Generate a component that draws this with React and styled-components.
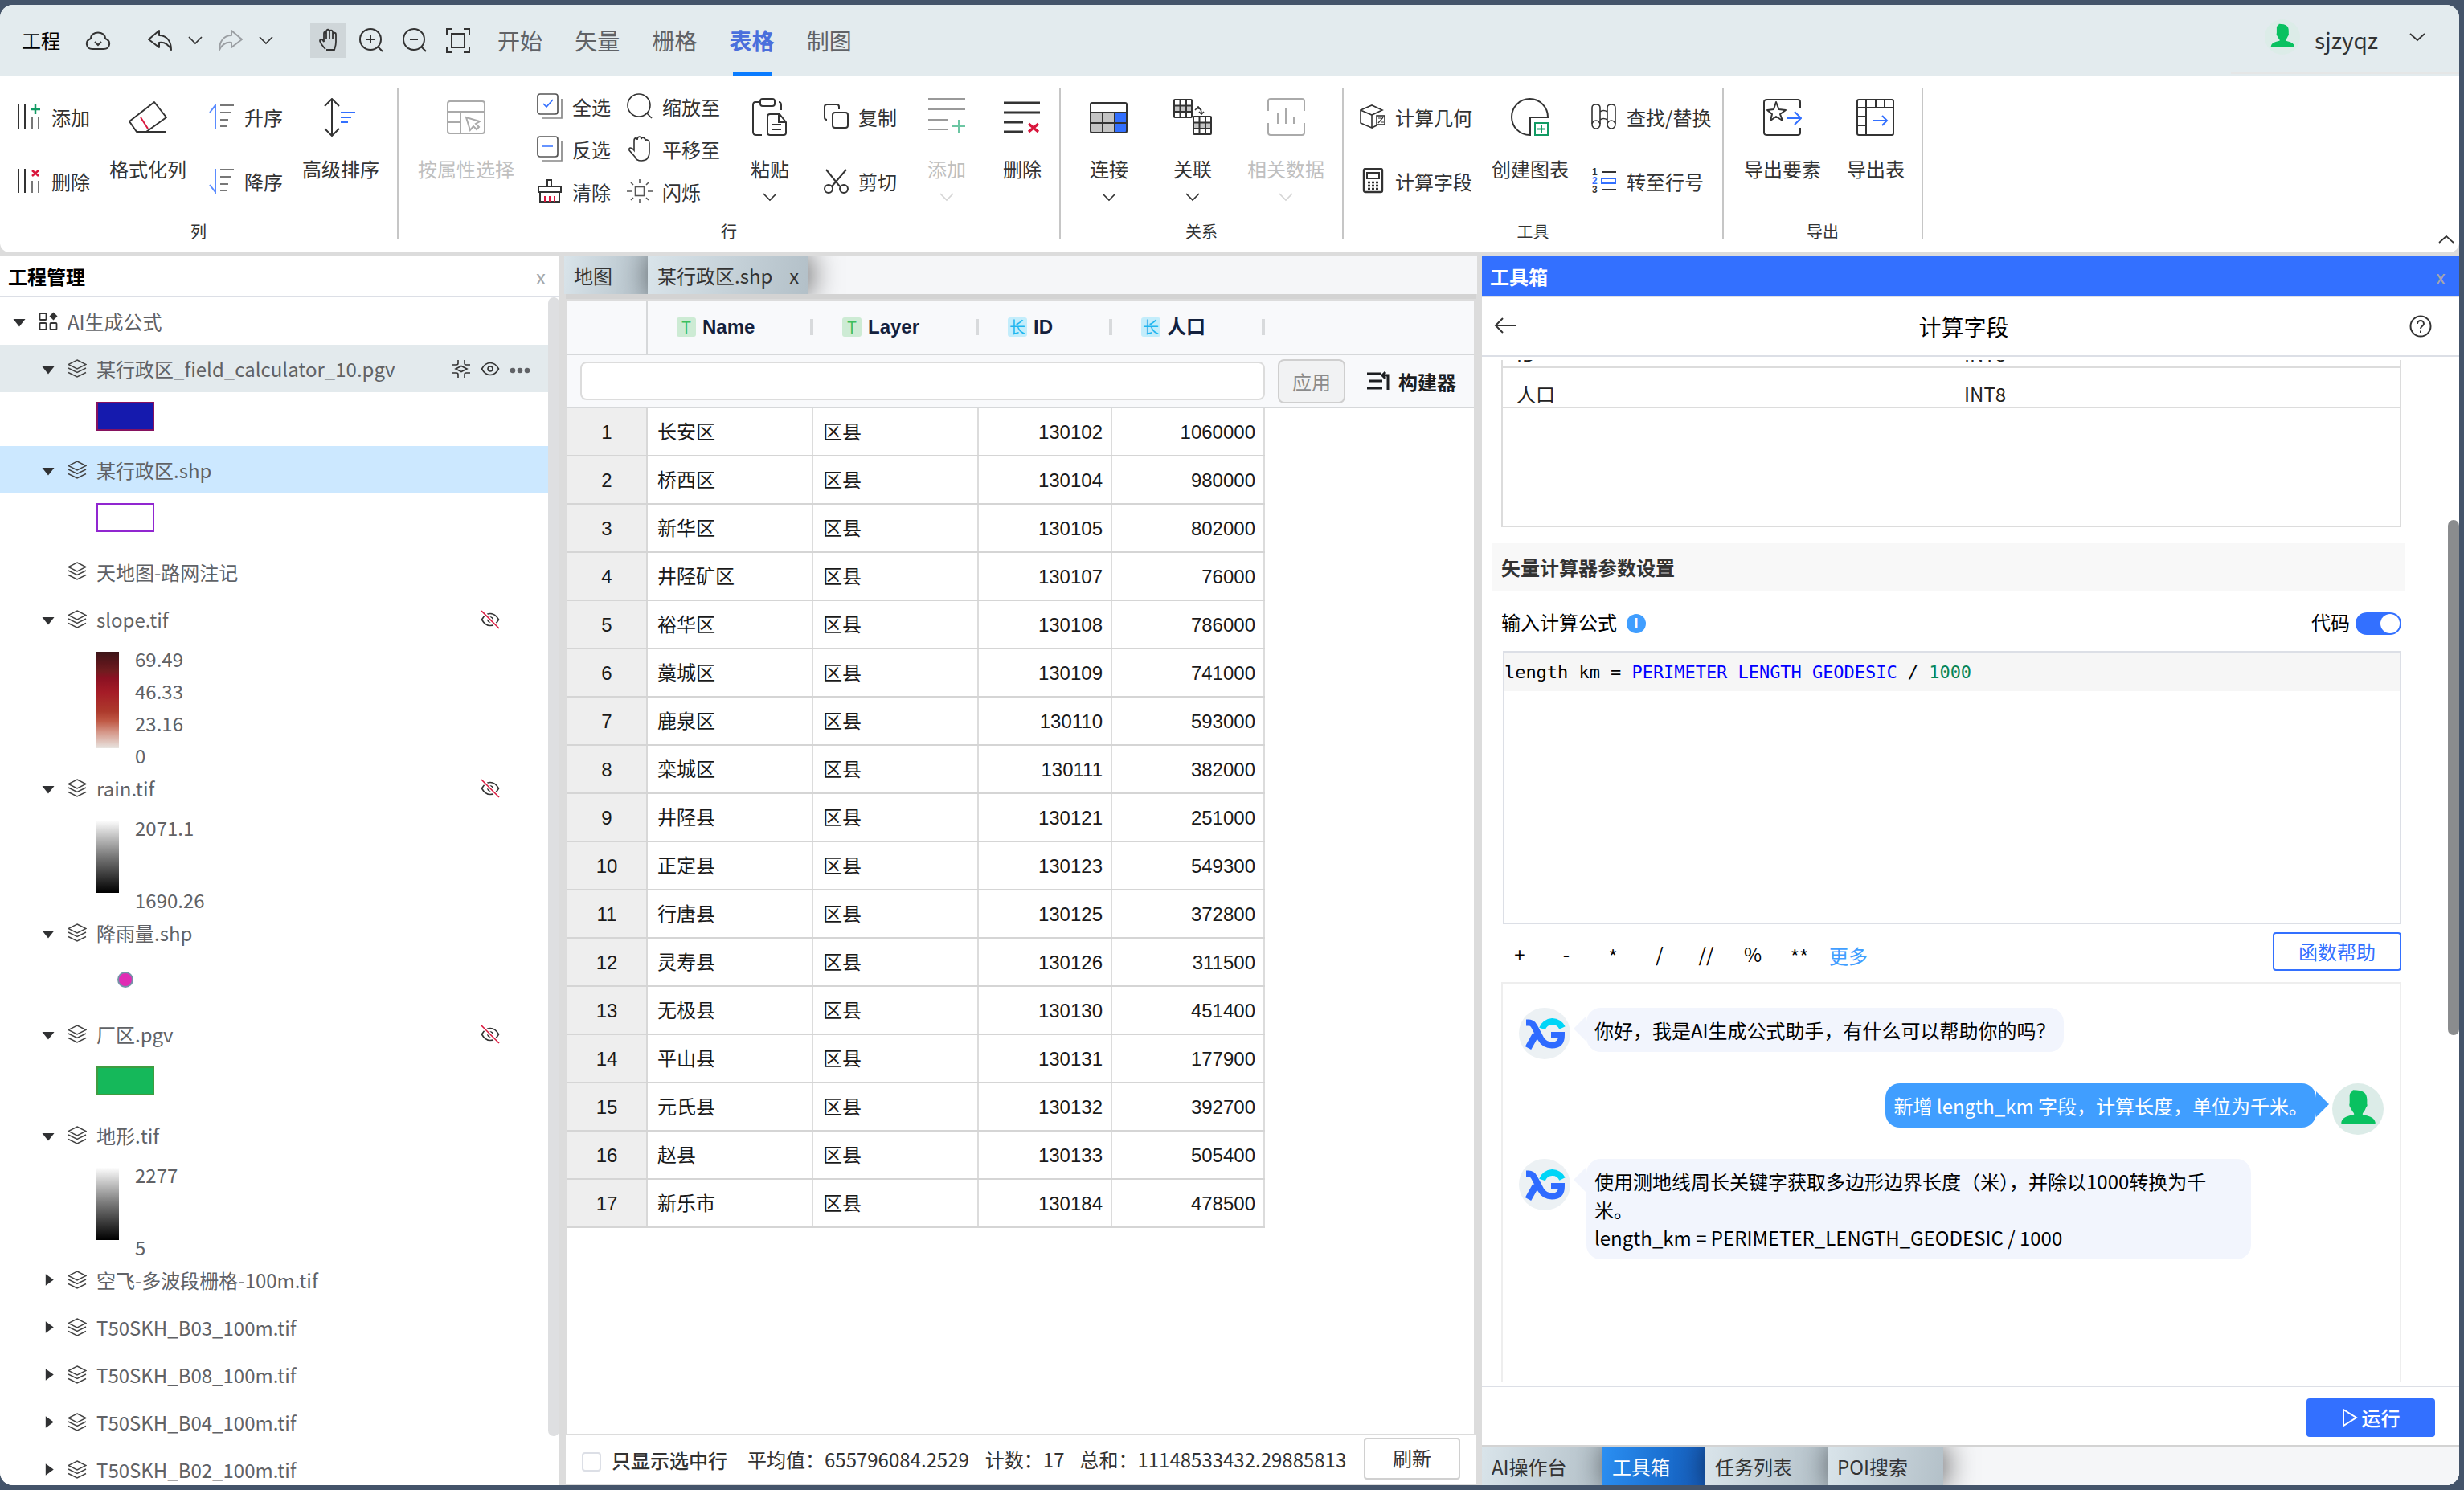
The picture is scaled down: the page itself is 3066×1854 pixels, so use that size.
import React from "react";
import styled, { createGlobalStyle, css } from "styled-components";

const sans = `"Noto Sans CJK SC", "Noto Sans", sans-serif`;
const arial = `"Liberation Sans", "Noto Sans CJK SC", sans-serif`;
const mono = `"DejaVu Sans Mono", "Noto Sans CJK SC", monospace`;

const Global = createGlobalStyle`
  * { box-sizing: border-box; }
  html, body { margin: 0; padding: 0; background: #44546a; }
  body { font-family: ${sans}; font-size: 24px; color: #333; overflow: hidden; }
`;

const Window = styled.div`
  display: flex;
  flex-direction: column;
  width: 3060px;
  height: 1842px;
  margin-top: 6px;
  border-radius: 16px;
  overflow: hidden;
  background: #dcdcdc;
`;

const Svg = styled.svg.attrs((p) => ({
  viewBox: `0 0 ${p.$w || 32} ${p.$h || p.$w || 32}`,
  width: p.$w || 32,
  height: p.$h || p.$w || 32,
}))`
  display: block;
  flex: none;
  fill: none;
  stroke: ${(p) => p.$c || "#333"};
  stroke-width: ${(p) => p.$s || 2};
`;

/* ---------- icons ---------- */
const BLUE = "#3370ff";
const GREEN = "#119a63";
const RED = "#d9163c";

const Chevron = ({ c, w = 18, up }) => (
  <Svg $w={w} $h={12} $c={c} $s={1.700}>
    {up ? <path d={`M1 10 L${w / 2} 2 L${w - 1} 10`} /> : <path d={`M1 2 L${w / 2} 10 L${w - 1} 2`} />}
  </Svg>
);
const Cloud = () => (
  <Svg>
    <path d="M9 27 H23 C31 27 33 17 25 14 C25 4 7 4 7 14 C-1 17 1 27 9 27 Z M12 18 L16 22 L20 18" />
  </Svg>
);
const Undo = () => (
  <Svg>
    <path d="M15 4 L2 15 L15 25 V19 C22 18 27 22 30 28 C30 18 25 10 15 10 Z" strokeLinejoin="round" />
  </Svg>
);
const Redo = () => (
  <Svg $c="#9b9fa3">
    <path d="M17 4 L30 15 L17 25 V19 C10 18 5 22 2 28 C2 18 7 10 17 10 Z" strokeLinejoin="round" />
  </Svg>
);
const handPath =
  "M11 27 C8 24 5 20 4 17 C4 14 7 14 9 18 V8 C9 5 12 5 12 8 V14 V5 C12 2 16 2 16 5 V14 V5.500 C16 3 20 3 20 6 V14 V9 C20 6 24 6 24 9 V18 C24 23 23 25 22 28 H12";
const Hand = () => (
  <Svg $w={28} $h={32} $s={1.800}>
    <path d={handPath} />
  </Svg>
);
const Zoom = ({ plus }) => (
  <Svg>
    <circle cx="15" cy="15" r="13" />
    <path d={`M24 24 L30 30 M10 15 H20 ${plus ? "M15 10 V20" : ""}`} />
  </Svg>
);
const Fit = () => (
  <Svg>
    <rect x="8" y="8" width="16" height="17" />
    <path d="M2 9 V2 H9 M23 2 H30 V9 M30 24 V31 H23 M9 31 H2 V24" />
  </Svg>
);
const Person = ({ size = 62 }) => (
  <svg width={size} height={size} viewBox="0 0 62 62">
    <circle cx="31" cy="31" r="31" fill="#dcece8" />
    <path
      fill="#09c160"
      d="M25 8 C38 8 42 12 42 20 V25 C43 28 41 28 40 31 C39 34 37 35 36.500 37 C36.500 39 50 38 52 47 V49 H11 V47 C13 38 26 39 26.500 37 C26 35 24 34 23 31 C21 28 20 27 21 24 V14 C22 10 24 11 25 8 Z"
    />
  </svg>
);
const XGLogo = () => (
  <Svg $w={64} $s={8}>
    <circle cx="32" cy="32" r="32" fill="#ecf1f4" stroke="none" />
    <path d="M29 26 A13.500 13.500 0 0 1 54 25" stroke="#00d5f7" />
    <path d="M9 18.500 H12 C15 18.500 17 19 19 23 L27 38 C31 45 36 46.500 41 46.500 C50 46.500 53 42 53 34 H40" stroke="#2f6bff" />
    <path d="M21 33 L11.500 50" stroke="#2f6bff" strokeWidth="8.500" />
  </Svg>
);

const ColBars = ({ mark }) => (
  <Svg>
    <path d="M3 1 V31 M11 1 V31" />
    <path d="M20 16 V31 M28 16 V31" stroke="#777" />
    {mark === "add" ? <path d="M24 1 V13 M18 7 H30" stroke={GREEN} strokeWidth="2.500" /> : <path d="M20 3 L28 10 M28 3 L20 10" stroke={RED} strokeWidth="2.500" />}
  </Svg>
);
const Eraser = () => (
  <Svg $w={48}>
    <path d="M10 42 L1 29 L32 5 L47 24 L22 42 Z M10 42 H47" strokeLinejoin="round" />
    <path d="M15 24 L24 38" stroke={RED} />
  </Svg>
);
const SortSmall = ({ down }) => (
  <Svg>
    <path d={down ? "M8 1 V30 L1 21" : "M8 31 V2 L1 11"} stroke="#5b8cff" />
    <path d="M14 2 H31 M14 11 H27 M14 20 H24 M14 28 H23" stroke="#777" />
  </Svg>
);
const SortAdv = () => (
  <Svg $w={48}>
    <path d="M13 1 V47 M4 10 L13 1 L22 10 M4 38 L13 47 L22 38" />
    <path d="M24 18 H42 M24 24 H37 M24 30 H33" stroke={BLUE} />
  </Svg>
);
const AttrSelect = () => (
  <Svg $w={48} $c="#aaa">
    <rect x="1" y="4" width="46" height="40" rx="3" />
    <path d="M1 17 H47 M17 17 V44 M1 30 H17 M24 24 L29 40 L33 35 L37 39 L40 36 L36 32 L41 29 Z" />
  </Svg>
);
const CheckBoxIco = ({ minus }) => (
  <Svg $s={1.700}>
    <rect x="1" y="1" width="25" height="25" rx="3" stroke="#555" />
    <path d="M31 7 V31 H7" stroke="#888" />
    <path d={minus ? "M7 13 H20" : "M8 13 L12 17 L20 8"} stroke={BLUE} />
  </Svg>
);
const Brush = () => (
  <Svg>
    <path d="M13 9 V2 H18 V9 M2 10 H30 V17 H2 Z M4 17 V29 H28 V17" />
    <path d="M10 22 V29 M16 22 V29 M22 22 V29" stroke={RED} />
  </Svg>
);
const Lens = () => (
  <Svg $s={1.600}>
    <circle cx="15" cy="15" r="14" />
    <path d="M25 25 L31 31" />
  </Svg>
);
const HandThin = () => (
  <Svg $s={1.600}>
    <path d="M10 26 L3 18 C2 14 6 14 9 18 V6 C9 2 13 2 13 5 C13 0 18 0 18 4 C19 1 23 2 23 6 C24 4 28 5 28 9 V20 C28 28 24 31 18 31 C14 31 11 29 10 26 Z" />
  </Svg>
);
const Flash = () => (
  <Svg $s={1.600} $c="#555">
    <rect x="10.500" y="10.500" width="11" height="11" />
    <path d="M16 1 V6 M16 26 V31 M0 16 H6 M26 16 H32 M5 5 L8 8 M24 24 L27 27 M27 5 L24 8 M5 27 L8 24" />
  </Svg>
);
const Paste = () => (
  <Svg $w={48}>
    <path d="M13 5 H6 Q3 5 3 9 V42 Q3 46 7 46 H14 M35 5 Q38 5 38 9 V15" />
    <rect x="12" y="1" width="18" height="9" rx="3" />
    <path d="M24 20 H36 L44 30 V43 Q44 46 41 46 H24 Q21 46 21 43 V23 Q21 20 24 20 Z M35 20 V30 H44 M27 33 H38 M27 39 H38" />
  </Svg>
);
const Copy = () => (
  <Svg>
    <path d="M5 20 Q2 20 2 17 V4 Q2 1 5 1 H17 Q20 1 20 4 V7" />
    <rect x="12" y="11" width="19" height="19" rx="3" />
  </Svg>
);
const Cut = () => (
  <Svg>
    <path d="M4 2 L21 23 M29 2 L11 23" />
    <circle cx="7" cy="26" r="5" />
    <circle cx="26" cy="26" r="5" />
  </Svg>
);
const RowAdd = () => (
  <Svg $w={48} $c="#999">
    <path d="M1 1 H47 M1 14 H47 M1 27 H25 M1 39 H25" />
    <path d="M39 27 V43 M31 35 H47" stroke="#6cc6a3" />
  </Svg>
);
const RowDel = () => (
  <Svg $w={48} $s={3}>
    <path d="M1 6 H46 M1 18 H46 M1 30 H25 M1 42 H25" />
    <path d="M32 32 L44 42 M44 32 L32 42" stroke={RED} strokeWidth="3.500" />
  </Svg>
);
const Join = () => (
  <Svg $w={48}>
    <rect x="2" y="18" width="29" height="25" fill="#c4c4c4" stroke="none" />
    <rect x="31" y="18" width="15" height="25" fill={BLUE} stroke="none" />
    <rect x="1" y="6" width="45" height="37" rx="2" />
    <path d="M1 18 H46 M1 31 H46 M16 18 V43 M31 18 V43" />
  </Svg>
);
const MiniGrid = ({ x, y }) => (
  <g transform={`translate(${x} ${y})`}>
    <rect width="22" height="22" fill="#fff" rx="1" />
    <rect x="1" y="8" width="20" height="7" fill="#c4c4c4" stroke="none" />
    <path d="M0 7.500 H22 M0 15 H22 M7.500 0 V22 M15 0 V22" />
  </g>
);
const Relate = () => (
  <Svg $w={48}>
    <MiniGrid x={1} y={2} />
    <MiniGrid x={25} y={23} />
    <path d="M27 15 L31 11 L35 15 M31 11 V13 Q35 13 35 19 M32 17 L35 20 L38 17" strokeWidth="1.600" />
  </Svg>
);
const RelData = () => (
  <Svg $w={48} $c="#aaa">
    <path d="M2 16 V4 Q2 1 5 1 H44 Q47 1 47 4 V16 M2 31 V43 Q2 46 5 46 H44 Q47 46 47 43 V31 M14 18 V32 M24 12 V32 M34 23 V32" />
  </Svg>
);
const Cube = () => (
  <Svg $s={1.600}>
    <path d="M1 8 L15 2 L28 8 L15 14 Z M1 8 V24 L15 30 V14 M15 30 L21 27" />
    <rect x="21" y="15" width="10" height="11" fill="#fff" />
    <path d="M23 24 L29 17 M23 18 H26 M27 23 H30" strokeWidth="1.200" />
  </Svg>
);
const Calc = () => (
  <Svg $s={2.400}>
    <rect x="5" y="1" width="23" height="29" rx="2" />
    <rect x="9" y="6" width="15" height="7" strokeWidth="2" />
    <path d="M10 18 H13 M15 18 H18 M20 18 H23 M10 22 H13 M15 22 H18 M20 22 H23 M10 26 H13 M15 26 H18 M20 26 H23" />
  </Svg>
);
const PieAdd = () => (
  <Svg $w={48}>
    <path d="M24 46 A22.500 22.500 0 1 1 46 24 H24 Z" />
    <rect x="30" y="31" width="16" height="15" stroke={GREEN} />
    <path d="M38 34 V43 M33 38.500 H43" stroke={GREEN} />
  </Svg>
);
const Binoc = () => (
  <Svg $s={1.600}>
    <path d="M1 25 V5 Q1 1 6 1 Q11 1 11 5 V25 M20 25 V5 Q20 1 25 1 Q30 1 30 5 V25 M11 10 Q15 7 20 10 M11 20 Q15 17 20 20" />
    <circle cx="6" cy="26" r="5" />
    <circle cx="25" cy="26" r="5" />
  </Svg>
);
const LineNo = () => (
  <Svg>
    <path d="M14 5 H31 M14 27 H31" />
    <rect x="13" y="13" width="17" height="6" stroke={BLUE} />
    <g stroke="none" fontFamily="Liberation Sans" fontWeight="700" fontSize="12">
      <text x="1" y="9" fill="#333">1</text>
      <text x="1" y="20" fill={BLUE}>2</text>
      <text x="1" y="31" fill="#333">3</text>
    </g>
  </Svg>
);
const ExportF = () => (
  <Svg $w={48}>
    <path d="M46 12 V5 Q46 2 43 2 H5 Q1 2 1 5 V43 Q1 46 5 46 H43 Q46 46 46 43 V37" />
    <path d="M16 5 L19.500 14 L28 15 L21 20 L24 28 L16 23 L9 28 L11 20 L5 15 L13 14 Z" strokeLinejoin="round" />
    <path d="M30 25 H47 M39 17 L47 25 L39 33" stroke={BLUE} />
  </Svg>
);
const ExportT = () => (
  <Svg $w={48}>
    <rect x="1" y="2" width="45" height="44" rx="2" />
    <path d="M1 12 H46 M12 2 V46 M1 23 H12 M1 34 H12 M24 2 V12 M35 2 V12" />
    <path d="M21 28 H38 M32 22 L38 28 L32 34" stroke={BLUE} />
  </Svg>
);
const Layers = () => (
  <Svg $w={24} $s={1.500} $c="#444">
    <path d="M12 1 L23 6.500 L12 12 L1 6.500 Z M1 11 L12 16.500 L23 11 M1 16.500 L12 22 L23 16.500" />
  </Svg>
);
const Apps = () => (
  <Svg $w={24} $s={1.800}>
    <rect x="1.500" y="2" width="8" height="8" rx="1" />
    <rect x="1.500" y="14" width="8" height="8" rx="1" />
    <rect x="14.500" y="14" width="8" height="8" rx="1" />
    <path d="M18.500 0.500 L23.500 5.500 L18.500 10.500 L13.500 5.500 Z" fill="#333" stroke="none" />
  </Svg>
);
const Eye = ({ off }) => (
  <Svg $w={24} $s={1.600}>
    <path d="M1.500 12 C7 2 17 2 22.500 12 C17 22 7 22 1.500 12 Z" />
    <circle cx="12" cy="12" r="3" />
    {off && <path d="M1 1 L23 23" stroke="#fff" strokeWidth="4.500" />}
    {off && <path d="M1 1 L23 23" stroke={RED} />}
  </Svg>
);
const Focus = () => (
  <Svg $w={24} $s={1.600}>
    <path d="M1 7 H6 Q8 7 8 5 V1 M23 7 H18 Q16 7 16 5 V1 M1 17 H6 Q8 17 8 19 V23 M23 17 H18 Q16 17 16 19 V23" />
    <path d="M5 12 L12 8.500 L19 12 L12 15.500 Z" />
  </Svg>
);
const Dots = () => (
  <Svg $w={26} $h={24}>
    <g fill="#606266" stroke="none">
      <circle cx="4" cy="14" r="3.300" />
      <circle cx="13" cy="14" r="3.300" />
      <circle cx="22" cy="14" r="3.300" />
    </g>
  </Svg>
);

/* ---------- header ---------- */
const Header = styled.header`
  display: flex;
  align-items: center;
  flex: none;
  height: 88px;
  background: #e3ebee;
`;
const Slot = styled.div`
  margin-left: ${(p) => p.$ml}px;
  line-height: 32px;
  color: #000;
`;
const HandButton = styled.div`
  display: flex;
  align-items: center;
  justify-content: center;
  width: 44px;
  height: 44px;
  margin-left: 16px;
  background: #cfd6d9;
`;
const Rule = styled.div`
  width: 1px;
  height: 24px;
  margin-left: ${(p) => p.$ml}px;
  background: #d3dade;
`;
const Nav = styled.nav`
  display: flex;
  gap: 40px;
  margin-left: 33px;
  height: 88px;
`;
const NavTab = styled.div`
  position: relative;
  width: 56.2px;
  line-height: 88px;
  font-size: 28px;
  color: #606266;
  ${(p) =>
    p.$active &&
    css`
      color: #4a6fdc;
      font-weight: 700;
      &::after {
        content: "";
        position: absolute;
        left: 4px;
        bottom: 0;
        width: 48px;
        height: 4px;
        background: #0a7cff;
      }
    `}
`;
const User = styled.div`
  display: flex;
  align-self: flex-start;
  align-items: center;
  width: 284px;
  height: 86px;
  margin-left: auto;
  padding: 0 42px 4px 42px;
  border-bottom: 2px solid #e5e6e6;
`;
const UserName = styled.div`
  flex: 1;
  margin-left: 18px;
  padding-top: 6px;
  font-size: 28px;
  line-height: 40px;
`;

/* ---------- ribbon ---------- */
const Ribbon = styled.section`
  display: flex;
  flex: none;
  height: 220px;
  margin-bottom: 4px;
  padding-top: 16px;
  background: #fff;
  border-radius: 0 0 12px 12px;
`;
const Group = styled.div`
  width: ${(p) => p.$w}px;
  height: 188px;
  border-right: 2px solid #c6c6c6;
`;
const GroupBody = styled.div`
  display: flex;
  height: 164px;
`;
const GroupLabel = styled.div`
  font-size: 20px;
  line-height: 28px;
  text-align: center;
`;
const BigTool = styled.div`
  display: flex;
  flex-direction: column;
  align-items: center;
  width: ${(p) => p.$w || 96}px;
  margin-left: ${(p) => p.$ml}px;
  padding-top: 12px;
  color: ${(p) => (p.$off ? "#bfbfbf" : "#333")};
`;
const BigText = styled.div`
  margin: 24px 0 13px;
  line-height: 32px;
  white-space: nowrap;
`;
const ToolStack = styled.div`
  display: flex;
  flex-direction: column;
  gap: ${(p) => (p.$three ? 13 : 40)}px;
  padding-top: ${(p) => (p.$three ? 2 : 15)}px;
  margin-left: ${(p) => p.$ml}px;
`;
const SmallTool = styled.div`
  display: flex;
  align-items: center;
  gap: 12px;
  height: 40px;
  white-space: nowrap;
`;
const Collapse = styled.div`
  display: flex;
  align-items: flex-end;
  margin-left: auto;
  padding: 0 6px 10px 0;
`;

const Big = ({ icon, text, w, ml, off, drop }) => (
  <BigTool $w={w} $ml={ml} $off={off}>
    {icon}
    <BigText>{text}</BigText>
    {drop && <Chevron c={off ? "#d5d5d5" : "#333"} />}
  </BigTool>
);
const Stack = ({ ml, items }) => (
  <ToolStack $ml={ml} $three={items.length === 3}>
    {items.map(([icon, text]) => (
      <SmallTool key={text}>
        {icon}
        <span>{text}</span>
      </SmallTool>
    ))}
  </ToolStack>
);
const RibbonGroup = ({ w, label, children }) => (
  <Group $w={w}>
    <GroupBody>{children}</GroupBody>
    <GroupLabel>{label}</GroupLabel>
  </Group>
);

/* ---------- workspace ---------- */
const Workspace = styled.main`
  display: flex;
  flex: 1;
  min-height: 0;
`;

/* ---------- project tree ---------- */
const TreePanel = styled.aside`
  display: flex;
  flex-direction: column;
  width: 696px;
  background: #fff;
`;
const PanelTitle = styled.div`
  display: flex;
  flex: none;
  justify-content: space-between;
  height: 52px;
  padding: 0 17px 0 10px;
  border-bottom: 2px solid #dcdfe6;
  line-height: 51px;
  font-weight: 700;
  color: ${(p) => (p.$blue ? "#fff" : "#000")};
  background: ${(p) => (p.$blue ? BLUE : "#fff")};
`;
const Close = styled.span`
  font-weight: 400;
  color: #a5a7aa;
`;
const TreeScroll = styled.div`
  display: flex;
  flex: 1;
  min-height: 0;
  overflow: hidden;
`;
const TreeList = styled.div`
  flex: 1;
`;
const TreeThumb = styled.div`
  width: 14px;
  height: 1417px;
  border-radius: 7px;
  background: #dedfe1;
`;
const TreeRow = styled.div`
  display: flex;
  align-items: center;
  height: ${(p) => p.$h || 59}px;
  padding-left: ${(p) => (p.$root ? 16 : 52)}px;
  color: #606266;
  background: ${(p) => p.$bg || "transparent"};
`;
const Caret = styled.div`
  width: 16px;
  height: 16px;
  margin-right: 16px;
  background: ${(p) => (p.$kind === "none" ? "none" : "#303133")};
  clip-path: ${(p) => (p.$kind === "right" ? "polygon(30% 5%, 92% 50%, 30% 95%)" : "polygon(3% 35%, 97% 35%, 50% 93%)")};
`;
const TreeText = styled.div`
  flex: 1;
  margin-left: 12px;
  white-space: nowrap;
`;
const RowActions = styled.div`
  display: flex;
  gap: 12px;
  width: 120px;
`;
const ActionGap = styled.div`
  width: 24px;
`;
const SwatchRow = styled.div`
  height: ${(p) => p.$h || 67}px;
  padding: ${(p) => p.$pt || 12}px 0 0 120px;
`;
const Swatch = styled.div`
  width: 72px;
  height: 36px;
  background: ${(p) => p.$fill};
  border: 2px solid ${(p) => p.$line};
`;
const PointSwatch = styled.div`
  width: 20px;
  height: 20px;
  margin: 7px 0 0 26px;
  border-radius: 50%;
  background: #e02cb4;
  border: 2px solid #7592a8;
`;
const Legend = styled.div`
  display: flex;
  gap: 20px;
  height: ${(p) => p.$bar + 31}px;
  padding-left: 120px;
  overflow: hidden;
`;
const LegendBar = styled.div`
  width: 28px;
  height: ${(p) => p.$bar}px;
  margin-top: 11px;
  background: linear-gradient(${(p) => p.$stops});
`;
const LegendValues = styled.div`
  display: flex;
  flex-direction: column;
  justify-content: space-between;
  flex: none;
  height: ${(p) => p.$bar + 40}px;
  line-height: 40px;
  color: #606266;
`;

const gray = "#fdfdfd, #777 50%, #000";
const redRamp = "#3c1518, #5c161b 12%, #701c1f 20%, #8a1122 27%, #a51c27 42%, #ad3a2c 62%, #c05a46 72%, #d69a8c 84%, #e8e4e0";

const Layer = ({ name, caret = "down", bg, hidden, tools, h }) => (
  <TreeRow $bg={bg} $h={h}>
    <Caret $kind={caret} />
    <Layers />
    <TreeText>{name}</TreeText>
    {hidden && (
      <RowActions>
        <ActionGap />
        <Eye off />
      </RowActions>
    )}
    {tools && (
      <RowActions>
        <Focus />
        <Eye />
        <Dots />
      </RowActions>
    )}
  </TreeRow>
);
const Ramp = ({ bar, stops, values }) => (
  <Legend $bar={bar}>
    <LegendBar $bar={bar} $stops={stops} />
    <LegendValues $bar={bar}>
      {values.map((v) => (
        <div key={v}>{v}</div>
      ))}
    </LegendValues>
  </Legend>
);

/* ---------- dark-edge tabs ---------- */
const TabBar = styled.div`
  display: flex;
  flex: none;
  height: 48px;
  overflow: hidden;
  background: #f5f6f8;
`;
const DockTab = styled.div`
  width: ${(p) => p.$w}px;
  padding-left: 12px;
  line-height: 49px;
  white-space: pre;
  color: ${(p) => (p.$active ? "#fff" : "#333")};
  background: ${(p) => (p.$active ? "linear-gradient(100deg, #2b8ff2, #1a6fd0 60%, #1659b4)" : "linear-gradient(100deg, #d9e4ea, #b3c0c8)")};
  box-shadow: 4px 0 36px rgba(0, 0, 0, 0.62);
`;
const DockClose = styled.span`
  margin-left: 21px;
`;

/* ---------- attribute table ---------- */
const TablePanel = styled.section`
  display: flex;
  flex-direction: column;
  width: 1136px;
  margin-left: 6px;
`;
const TableFrame = styled.div`
  display: flex;
  flex-direction: column;
  flex: 1;
  min-height: 0;
  margin: 0 0 0 2px;
  width: 1132px;
  border-top: 6px solid #d3d3d3;
  padding: 2px 0 2px;
  background: #dcdcdc;
`;
const HeadRow = styled.div`
  display: flex;
  flex: none;
  margin: 0 2px;
  height: 68px;
  background: #f8f9fb;
  border-bottom: 2px solid #d6d8da;
`;
const HeadIndex = styled.div`
  width: 100px;
  border-right: 2px solid #d6d8da;
`;
const HeadCell = styled.div`
  display: flex;
  align-items: center;
  width: ${(p) => p.$w}px;
  padding-left: 36px;
  font: 700 24px/30px ${arial};
  color: #14213d;
`;
const TypeBadge = styled.span`
  width: 24px;
  height: 24px;
  margin-right: 8px;
  border-radius: 3px;
  font: 400 20px/24px ${sans};
  text-align: center;
  color: ${(p) => (p.$text ? "#3cbf5c" : "#1fb6ef")};
  background: ${(p) => (p.$text ? "#cdebd4" : "#c3edfb")};
`;
const HeadTick = styled.span`
  width: 4px;
  height: 20px;
  margin-left: auto;
  background: #d8dadc;
`;
const FilterRow = styled.div`
  display: flex;
  flex: none;
  align-items: center;
  margin: 0 2px;
  height: 66px;
  padding-left: 16px;
  background: #f8f9fb;
  border-bottom: 2px solid #d6d8da;
`;
const FilterInput = styled.div`
  width: 852px;
  height: 48px;
  border: 2px solid #dcdcdc;
  border-radius: 8px;
  background: #fff;
`;
const Apply = styled.div`
  width: 84px;
  height: 55px;
  margin-left: 16px;
  border: 2px solid #cfcfcf;
  border-radius: 8px;
  line-height: 51px;
  text-align: center;
  color: #8b8b8b;
  background: #f1f2f3;
`;
const Builder = styled.div`
  display: flex;
  align-items: center;
  gap: 10px;
  margin-left: 26px;
  font-weight: 700;
  color: #1c1e21;
`;
const Rows = styled.div`
  flex: 1;
  margin: 0 2px;
  background: #fff;
`;
const Row = styled.div`
  display: flex;
  width: 868px;
  height: 60px;
  border-bottom: 2px solid #d5d5d5;
  font: 24px/60px ${arial};
  color: #1a1a1a;
`;
const Cell = styled.div`
  width: ${(p) => p.$w}px;
  padding: 0 10px 0 12px;
  text-align: ${(p) => p.$align || "left"};
  border-right: 2px solid #dcdcdc;
  ${(p) => p.$index && "background: #eee; padding: 0; border-right-color: #d8d8d8;"}
`;
const TableFooter = styled.div`
  display: flex;
  flex: none;
  align-items: center;
  height: 62px;
  border-top: 2px solid #dcdcdc;
  padding: 0 0 2px 20px;
  background: #fff;
  white-space: nowrap;
`;
const Check = styled.span`
  width: 24px;
  height: 24px;
  margin-top: 7px;
  border: 2px solid #dcdfe6;
  border-radius: 4px;
`;
const OnlySelected = styled.span`
  margin-left: 13px;
  padding-top: 2px;
  font-weight: 500;
`;
const Stat = styled.span`
  margin-left: ${(p) => p.$ml}px;
`;
const Refresh = styled.div`
  width: 120px;
  height: 52px;
  margin: 0 19px 0 auto;
  border: 2px solid #d0d0d0;
  border-radius: 4px;
  line-height: 46px;
  text-align: center;
`;

/* ---------- toolbox ---------- */
const Toolbox = styled.aside`
  display: flex;
  flex-direction: column;
  width: 1216px;
  margin-left: 6px;
  background: #fff;
`;
const ToolHead = styled.div`
  display: flex;
  flex: none;
  align-items: center;
  justify-content: space-between;
  height: 74px;
  padding: 0 34px 0 15px;
  border-bottom: 2px solid #dcdfe6;
  font-size: 28px;
  color: #000;
`;
const ToolScroll = styled.div`
  display: flex;
  flex: 1;
  min-height: 0;
  margin-top: 4px;
`;
const ToolBody = styled.div`
  width: 1202px;
  padding: 0 58px 0 24px;
  overflow: hidden;
  color: #000;
`;
const ToolThumb = styled.div`
  width: 14px;
  height: 641px;
  margin-top: 199px;
  border-radius: 7px;
  background: #8a8c8e;
`;
const FieldBox = styled.div`
  height: 250px;
  margin-top: -42px;
  border: 2px solid #dcdcdc;
`;
const FieldRow = styled.div`
  display: grid;
  grid-template-columns: 557px 1fr;
  height: 50px;
  padding: 9px 0 0 17px;
  border-bottom: 2px solid #dcdcdc;
  line-height: 46px;
  color: #222;
`;
const SectionTitle = styled.div`
  height: 59px;
  margin: 20px -4px 0 -12px;
  padding-left: 12px;
  line-height: 59px;
  font-weight: 700;
  color: #333;
  background: #f8f8f8;
`;
const FormulaLine = styled.div`
  display: flex;
  align-items: center;
  height: 75px;
  padding-top: 2px;
`;
const Info = styled.span`
  width: 24px;
  height: 24px;
  margin: 4px auto 0 12px;
  border-radius: 50%;
  font: 700 18px/24px ${arial};
  text-align: center;
  color: #fff;
  background: #409eff;
`;
const Switch = styled.span`
  display: flex;
  justify-content: flex-end;
  width: 57px;
  height: 28px;
  margin: 4px 0 0 7px;
  padding: 2px;
  border-radius: 14px;
  background: ${BLUE};
`;
const Knob = styled.span`
  width: 24px;
  height: 24px;
  border-radius: 50%;
  background: #fff;
`;
const Editor = styled.div`
  height: 340px;
  margin-left: 2px;
  border: 2px solid #dcdfe6;
`;
const CodeLine = styled.div`
  height: 48px;
  font: 22px/49px ${mono};
  letter-spacing: -0.040px;
  white-space: pre;
  background: #f6f6f6;
`;
const Keyword = styled.span`
  color: #0000ff;
`;
const Numeral = styled.span`
  color: #098658;
`;
const Operators = styled.div`
  display: flex;
  align-items: center;
  height: 72px;
  margin-left: -6px;
`;
const Op = styled.span`
  width: 58px;
  padding-top: ${(p) => (p.$star ? 7 : 0)}px;
  text-align: center;
`;
const More = styled.span`
  margin: 4px auto 0 8px;
  color: #409eff;
`;
const HelpButton = styled.span`
  width: 160px;
  height: 48px;
  margin-bottom: 4px;
  border: 2px solid ${BLUE};
  border-radius: 4px;
  line-height: 43px;
  text-align: center;
  color: ${BLUE};
`;
const Chat = styled.div`
  display: flex;
  flex-direction: column;
  gap: 30px;
  height: 600px;
  padding: 30px 20px;
  border: 2px solid #eee;
`;
const Message = styled.div`
  display: flex;
  align-items: flex-start;
  gap: 20px;
  flex-direction: ${(p) => (p.$mine ? "row-reverse" : "row")};
`;
const Bubble = styled.div`
  position: relative;
  max-width: 827px;
  padding: 10px;
  border-radius: 18px;
  line-height: 35px;
  color: ${(p) => (p.$mine ? "#fff" : "#000")};
  background: ${(p) => (p.$mine ? "#409eff" : "#f2f5fd")};
  &::before {
    content: "";
    position: absolute;
    top: 10px;
    ${(p) => (p.$mine ? "left: 100%;" : "right: 100%;")}
    border: 16px solid transparent;
    ${(p) => (p.$mine ? "border-left-color: #409eff; border-right: 0;" : "border-right-color: #f2f5fd; border-left: 0;")}
  }
`;
const RunBar = styled.div`
  display: flex;
  flex: none;
  justify-content: flex-end;
  height: 76px;
  margin-top: 4px;
  padding: 14px 30px 0 0;
  border-top: 2px solid #dcdfe6;
  border-bottom: 2px solid #d3d3d3;
`;
const Run = styled.div`
  display: flex;
  align-items: center;
  justify-content: center;
  gap: 5px;
  width: 160px;
  height: 48px;
  padding-bottom: 2px;
  border-radius: 4px;
  font-weight: 500;
  color: #fff;
  background: ${BLUE};
`;

const table = [
  ["长安区", 130102, 1060000],
  ["桥西区", 130104, 980000],
  ["新华区", 130105, 802000],
  ["井陉矿区", 130107, 76000],
  ["裕华区", 130108, 786000],
  ["藁城区", 130109, 741000],
  ["鹿泉区", 130110, 593000],
  ["栾城区", 130111, 382000],
  ["井陉县", 130121, 251000],
  ["正定县", 130123, 549300],
  ["行唐县", 130125, 372800],
  ["灵寿县", 130126, 311500],
  ["无极县", 130130, 451400],
  ["平山县", 130131, 177900],
  ["元氏县", 130132, 392700],
  ["赵县", 130133, 505400],
  ["新乐市", 130184, 478500],
];
const columns = [
  ["T", "Name", 206],
  ["T", "Layer", 206],
  ["长", "ID", 166],
  ["长", "人口", 190],
];

const TopHeader = () => (
  <Header>
    <Slot $ml={27}>工程</Slot>
    <Slot $ml={31}><Cloud /></Slot>
    <Rule $ml={22} />
    <Slot $ml={22}><Undo /></Slot>
    <Slot $ml={19}><Chevron /></Slot>
    <Slot $ml={19}><Redo /></Slot>
    <Slot $ml={19}><Chevron /></Slot>
    <Rule $ml={29} />
    <HandButton><Hand /></HandButton>
    <Slot $ml={16}><Zoom plus /></Slot>
    <Slot $ml={22}><Zoom /></Slot>
    <Slot $ml={22}><Fit /></Slot>
    <Nav>
      {["开始", "矢量", "栅格", "表格", "制图"].map((t) => (
        <NavTab key={t} $active={t === "表格"}>{t}</NavTab>
      ))}
    </Nav>
    <User>
      <Person size={44} />
      <UserName>sjzyqz</UserName>
      <Chevron w={20} />
    </User>
  </Header>
);

const RibbonBar = () => (
  <Ribbon>
    <RibbonGroup w={496} label="列">
      <Stack ml={20} items={[[<ColBars mark="add" />, "添加"], [<ColBars mark="del" />, "删除"]]} />
      <Big ml={24} icon={<Eraser />} text="格式化列" />
      <Stack ml={28} items={[[<SortSmall />, "升序"], [<SortSmall down />, "降序"]]} />
      <Big ml={24} icon={<SortAdv />} text="高级排序" />
    </RibbonGroup>
    <RibbonGroup w={824} label="行">
      <Big ml={24} w={120} off icon={<AttrSelect />} text="按属性选择" />
      <Stack ml={28} items={[[<CheckBoxIco />, "全选"], [<CheckBoxIco minus />, "反选"], [<Brush />, "清除"]]} />
      <Stack ml={20} items={[[<Lens />, "缩放至"], [<HandThin />, "平移至"], [<Flash />, "闪烁"]]} />
      <Big ml={38} w={48} drop icon={<Paste />} text="粘贴" />
      <Stack ml={42} items={[[<Copy />, "复制"], [<Cut />, "剪切"]]} />
      <Big ml={38} w={48} drop off icon={<RowAdd />} text="添加" />
      <Big ml={46} w={48} icon={<RowDel />} text="删除" />
    </RibbonGroup>
    <RibbonGroup w={352} label="关系">
      <Big ml={36} w={48} drop icon={<Join />} text="连接" />
      <Big ml={56} w={48} drop icon={<Relate />} text="关联" />
      <Big ml={44} drop off icon={<RelData />} text="相关数据" />
    </RibbonGroup>
    <RibbonGroup w={473} label="工具">
      <Stack ml={20} items={[[<Cube />, "计算几何"], [<Calc />, "计算字段"]]} />
      <Big ml={24} icon={<PieAdd />} text="创建图表" />
      <Stack ml={28} items={[[<Binoc />, "查找/替换"], [<LineNo />, "转至行号"]]} />
    </RibbonGroup>
    <RibbonGroup w={248} label="导出">
      <Big ml={25} icon={<ExportF />} text="导出要素" />
      <Big ml={32} w={72} icon={<ExportT />} text="导出表" />
    </RibbonGroup>
    <Collapse><Chevron w={20} up /></Collapse>
  </Ribbon>
);

const ProjectTree = () => (
  <TreePanel>
    <PanelTitle>
      工程管理<Close>x</Close>
    </PanelTitle>
    <TreeScroll>
      <TreeList>
        <TreeRow $root>
          <Caret />
          <Apps />
          <TreeText>AI生成公式</TreeText>
        </TreeRow>
        <Layer name="某行政区_field_calculator_10.pgv" bg="#e3eaed" tools />
        <SwatchRow><Swatch $fill="#151aae" $line="#86125f" /></SwatchRow>
        <Layer name="某行政区.shp" bg="#cce8ff" />
        <SwatchRow><Swatch $fill="#fff" $line="#9126d0" /></SwatchRow>
        <Layer name="天地图-路网注记" caret="none" h={60} />
        <Layer name="slope.tif" hidden />
        <Ramp bar={120} stops={redRamp} values={["69.49", "46.33", "23.16", "0"]} />
        <Layer name="rain.tif" hidden />
        <Ramp bar={90} stops={gray} values={["2071.1", "1690.26"]} />
        <Layer name="降雨量.shp" />
        <SwatchRow><PointSwatch /></SwatchRow>
        <Layer name="厂区.pgv" hidden />
        <SwatchRow $pt={11}><Swatch $fill="#15b85a" $line="#3f9c40" /></SwatchRow>
        <Layer name="地形.tif" />
        <Ramp bar={90} stops={gray} values={["2277", "5"]} />
        {["空飞-多波段栅格-100m.tif", "T50SKH_B03_100m.tif", "T50SKH_B08_100m.tif", "T50SKH_B04_100m.tif", "T50SKH_B02_100m.tif"].map((n) => (
          <Layer key={n} name={n} caret="right" />
        ))}
      </TreeList>
      <TreeThumb />
    </TreeScroll>
  </TreePanel>
);

const AttributeTable = () => (
  <TablePanel>
    <TabBar>
      <DockTab $w={104}>地图</DockTab>
      <DockTab $w={199}>
        某行政区.shp<DockClose>x</DockClose>
      </DockTab>
    </TabBar>
    <TableFrame>
      <HeadRow>
        <HeadIndex />
        {columns.map(([type, name, w]) => (
          <HeadCell key={name} $w={w}>
            <TypeBadge $text={type === "T"}>{type}</TypeBadge>
            {name}
            <HeadTick />
          </HeadCell>
        ))}
      </HeadRow>
      <FilterRow>
        <FilterInput />
        <Apply>应用</Apply>
        <Builder>
          <Svg $w={30} $h={24} $s={3} $c="#1c1e21">
            <path d="M1 3 H18 M4 12 H20 M1 21 H20 M20 5 H27 V23 M24 1 L20 5 L24 9" />
          </Svg>
          构建器
        </Builder>
      </FilterRow>
      <Rows>
        {table.map(([name, id, pop], i) => (
          <Row key={id}>
            <Cell $w={100} $align="center" $index>{i + 1}</Cell>
            <Cell $w={206}>{name}</Cell>
            <Cell $w={206}>区县</Cell>
            <Cell $w={166} $align="right">{id}</Cell>
            <Cell $w={190} $align="right">{pop}</Cell>
          </Row>
        ))}
      </Rows>
      <TableFooter>
        <Check />
        <OnlySelected>只显示选中行</OnlySelected>
        <Stat $ml={25}>平均值：655796084.2529</Stat>
        <Stat $ml={20}>计数：17</Stat>
        <Stat $ml={19}>总和：11148533432.29885813</Stat>
        <Refresh>刷新</Refresh>
      </TableFooter>
    </TableFrame>
  </TablePanel>
);

const ToolboxPanel = () => (
  <Toolbox>
    <PanelTitle $blue>
      工具箱<Close>x</Close>
    </PanelTitle>
    <ToolHead>
      <Svg $w={30} $h={24}>
        <path d="M2 11 H28 M11 2 L2 11 L11 20" />
      </Svg>
      计算字段
      <Svg $w={28}>
        <circle cx="14" cy="14" r="12.500" />
        <path d="M10 11 C10 5.500 18 5.500 18 11 C18 14 14 13.500 14 17 M14 19.500 V22" />
      </Svg>
    </ToolHead>
    <ToolScroll>
      <ToolBody>
        <FieldBox>
          <FieldRow><span>ID</span><span>INT8</span></FieldRow>
          <FieldRow><span>人口</span><span>INT8</span></FieldRow>
        </FieldBox>
        <SectionTitle>矢量计算器参数设置</SectionTitle>
        <FormulaLine>
          输入计算公式
          <Info>i</Info>
          代码
          <Switch><Knob /></Switch>
        </FormulaLine>
        <Editor>
          <CodeLine>
            length_km = <Keyword>PERIMETER_LENGTH_GEODESIC</Keyword> / <Numeral>1000</Numeral>
          </CodeLine>
        </Editor>
        <Operators>
          {["+", "-", "*", "/", "//", "%", "**"].map((o) => (
            <Op key={o} $star={o[0] === "*"}>{o}</Op>
          ))}
          <More>更多</More>
          <HelpButton>函数帮助</HelpButton>
        </Operators>
        <Chat>
          <Message>
            <XGLogo />
            <Bubble>你好，我是AI生成公式助手，有什么可以帮助你的吗？</Bubble>
          </Message>
          <Message $mine>
            <Person size={64} />
            <Bubble $mine>新增 length_km 字段，计算长度，单位为千米。</Bubble>
          </Message>
          <Message>
            <XGLogo />
            <Bubble>
              使用测地线周长关键字获取多边形边界长度（米），并除以1000转换为千米。
              <br />
              length_km = PERIMETER_LENGTH_GEODESIC / 1000
            </Bubble>
          </Message>
        </Chat>
      </ToolBody>
      <ToolThumb />
    </ToolScroll>
    <RunBar>
      <Run>
        <Svg $w={20} $h={24} $c="#fff">
          <path d="M2 3 L18 13 L2 23 Z" />
        </Svg>
        运行
      </Run>
    </RunBar>
    <TabBar>
      <DockTab $w={150}>AI操作台</DockTab>
      <DockTab $w={128} $active>工具箱</DockTab>
      <DockTab $w={152}>任务列表</DockTab>
      <DockTab $w={144}>POI搜索</DockTab>
    </TabBar>
  </Toolbox>
);

export default function App() {
  return (
    <>
      <Global />
      <Window>
        <TopHeader />
        <RibbonBar />
        <Workspace>
          <ProjectTree />
          <AttributeTable />
          <ToolboxPanel />
        </Workspace>
      </Window>
    </>
  );
}
